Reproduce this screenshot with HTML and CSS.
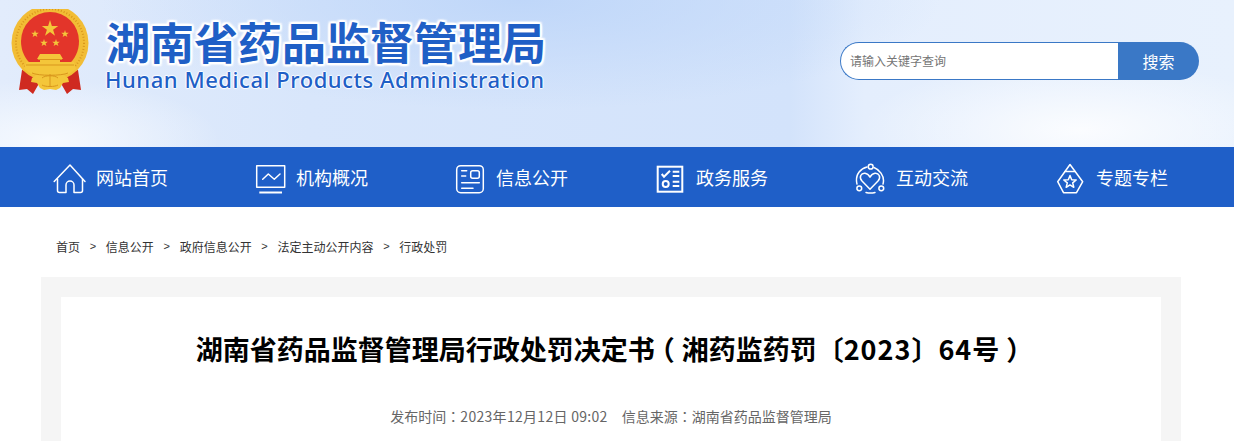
FILE: index.html
```html
<!DOCTYPE html>
<html lang="zh-CN">
<head>
<meta charset="utf-8">
<title>湖南省药品监督管理局行政处罚决定书</title>
<link rel="stylesheet" href="styles.css">
</head>
<body>
<header class="masthead">
  <div class="brand">
    <svg class="emblem" viewBox="11 9 79 85" aria-hidden="true">
      <path class="ribbon" d="M33 67L22 70 19 90l8-1 6 5 8-14z"/>
      <path class="ribbon" d="M67 67l11 3 3 20-8-1-6 5-8-14z"/>
      <circle class="ring" cx="50" cy="43" r="38.500"/>
      <circle class="ring-dots" cx="50" cy="43" r="34"/>
      <path class="red" d="M50 12a29 29 0 0 1 29 29c0 10-4 18-11 24H32c-7-6-11-14-11-24a29 29 0 0 1 29-29z"/>
      <path class="gold" d="M50 20l1.900 6h6.300l-5.100 3.700 1.900 6-5-3.700-5 3.700 1.900-6-5.100-3.700h6.300z"/>
      <path class="gold" d="M35 30l.9 2.700h2.900l-2.300 1.700.9 2.700-2.400-1.700-2.400 1.700.9-2.700-2.300-1.700h2.900z"/>
      <path class="gold" d="M65 30l.9 2.700h2.900l-2.300 1.700.9 2.700-2.400-1.700-2.400 1.700.9-2.700-2.300-1.700h2.900z"/>
      <path class="gold" d="M44 39l.9 2.700h2.900l-2.300 1.700.9 2.700-2.400-1.700-2.400 1.700.9-2.700-2.300-1.700h2.900z"/>
      <path class="gold" d="M56 39l.9 2.700h2.900l-2.300 1.700.9 2.700-2.400-1.700-2.400 1.700.9-2.700-2.300-1.700h2.900z"/>
      <path class="gold" d="M40 54h20l3 5h-3v3h14l2 7H24l2-7h14v-3h-3z"/>
      <path class="gold-line" d="M38 59.500h24M26 65h48"/>
      <path class="gold" d="M24 69h52l-7 5-5 1 4 3 1 4-6 1-3 5-4 2-6-1-6 1-4-2-3-5-6-1 1-4 4-3-5-1z"/>
      <path class="gold-line" d="M32 73c6 3 30 3 36 0M42 78c3-3 13-3 16 0M42 85c3 2 13 2 16 0M50 74v12"/>
    </svg>
    <div class="brand-text">
      <div class="brand-cn">湖南省药品监督管理局</div>
      <div class="brand-en">Hunan Medical Products Administration</div>
    </div>
  </div>
  <form class="search">
    <div class="search-input">请输入关键字查询</div>
    <div class="search-btn">搜索</div>
  </form>
</header>
<nav class="nav">
  <a class="nav-item">
    <svg class="nav-icon" viewBox="0 0 32 32"><path d="M1.200 20.500L17 4l15 16.500"/><path d="M4.500 18v11.500a2 2 0 0 0 2 2H13V24a4 4 0 0 1 8 0v7.500h6.500a2 2 0 0 0 2-2V18"/></svg>
    <span>网站首页</span>
  </a>
  <a class="nav-item">
    <svg class="nav-icon" viewBox="0 0 32 32"><rect x="3.700" y="4.700" width="28" height="21.600"/><path d="M9.700 18.300L15.300 13l6 5.300L27 13"/><path class="thick" d="M6.300 31.500H29"/></svg>
    <span>机构概况</span>
  </a>
  <a class="nav-item">
    <svg class="nav-icon" viewBox="0 0 32 32"><rect x="3.700" y="4.700" width="26.600" height="27" rx="4"/><path d="M8.700 9.700h5M8.700 15h4M8.700 21.700h17.600M8.700 27.300H20"/><rect x="17.700" y="9.700" width="8.600" height="7.600" rx="2"/></svg>
    <span>信息公开</span>
  </a>
  <a class="nav-item">
    <svg class="nav-icon" viewBox="0 0 32 32"><rect class="thick" x="4.700" y="5.700" width="24.600" height="25"/><path class="thick" d="M8.700 13l2.300 2.700 6-6M19.700 10.700h6.600M19.700 15h6.600M19.700 20.700h6.600M19.700 25h6.600"/><circle class="thick" cx="12.700" cy="23" r="3"/></svg>
    <span>政务服务</span>
  </a>
  <a class="nav-item">
    <svg class="nav-icon" viewBox="0 0 32 32"><path d="M17 28.300L9 20c-3.500-4-.8-8 3-7.700 2.200.2 3.700 1.500 5 3.800 1.300-2.300 2.800-3.600 5-3.800 3.800-.3 6.500 3.700 3 7.700z"/><path d="M14 6C7.500 7.500 3 13 3.500 20c.1 1 .2 2 .5 3"/><circle cx="17.700" cy="5.700" r="2.400"/><path d="M21 6.500c6 2.500 9.500 8 9.500 13 0 1-.1 2.200-.5 3.500"/><circle cx="6.300" cy="27.300" r="2.400"/><circle cx="28.300" cy="27.300" r="2.400"/><path d="M13 31.500c3 .8 6 .8 9 0"/></svg>
    <span>互动交流</span>
  </a>
  <a class="nav-item">
    <svg class="nav-icon" viewBox="0 0 32 32"><path d="M17 3.500L4.700 20.700l5.800 11h13l6.200-11z"/><path d="M12 10.500h10"/><path d="M17 14.500l1.700 4.200 4.500.3-3.500 2.900 1.100 4.400-3.800-2.400-3.800 2.400 1.100-4.400-3.500-2.900 4.500-.3z"/></svg>
    <span>专题专栏</span>
  </a>
</nav>
<div class="crumbs">
  <a>首页</a><i>&gt;</i><a>信息公开</a><i>&gt;</i><a>政府信息公开</a><i>&gt;</i><a>法定主动公开内容</a><i>&gt;</i><a>行政处罚</a>
</div>
<main class="panel">
  <article class="sheet">
    <h1 class="title">湖南省药品监督管理局行政处罚决定书<span class="paren-open">（</span>湘药监药罚〔<span class="num">2023</span>〕<span class="num">64</span>号<span class="paren-close">）</span></h1>
    <p class="meta"><span>发布时间<b class="punct" lang="zh-TW">：</b><b class="date">2023年12月12日 09:02</b></span><span>信息来源<b class="punct" lang="zh-TW">：</b>湖南省药品监督管理局</span></p>
  </article>
</main>
</body>
</html>
```
FILE: styles.css
```css
* { box-sizing: border-box; }
html, body { margin: 0; height: 100%; overflow: hidden; background: #fff; }
body {
  display: flex;
  flex-direction: column;
  font-family: "Noto Sans CJK SC", "Noto Sans", sans-serif;
}
.masthead {
  height: 147px;
  flex: none;
  display: flex;
  justify-content: space-between;
  background:
    radial-gradient(ellipse 220px 70px at 1080px 130px, rgba(252,253,255,.95), rgba(252,253,255,0)),
    radial-gradient(ellipse 170px 60px at 50px 140px, rgba(248,251,255,.9), rgba(248,251,255,0)),
    radial-gradient(ellipse 420px 110px at 520px 0, rgba(190,214,249,.95), rgba(190,214,249,0)),
    linear-gradient(to right, #e2ecfc 0, #d8e6fb 25%, #d3e3fb 64%, #e4eefd 70%, #e8f1fd 100%);
}
.brand { display: flex; align-items: flex-start; padding: 9px 0 0 11px; }
.emblem { width: 79px; height: 85px; flex: none; display: block; }
.ribbon { fill: #cf2a20; }
.ring { fill: #f2bd35; }
.ring-dots { fill: none; stroke: #d9961c; stroke-width: 2; stroke-dasharray: 1 2; }
.red { fill: #e3352a; }
.gold { fill: #f4c63a; }
.gold-line { fill: none; stroke: #d9961c; stroke-width: 1; }
.brand-text { margin-left: 15px; padding-top: 8px; }
.brand-cn {
  font-size: 44px;
  line-height: 48px;
  font-weight: 700;
  color: #1f5fc6;
  white-space: nowrap;
  margin-left: 1px;
  text-shadow: 2px 0 1px #fff, -2px 0 1px #fff, 0 2px 1px #fff, 0 -2px 1px #fff, 2px 2px 2px #fff, -2px -2px 2px #fff, 2px -2px 2px #fff, -2px 2px 2px #fff;
}
.brand-en {
  font-family: "Noto Sans", sans-serif;
  font-size: 22px;
  font-weight: 500;
  line-height: 28px;
  letter-spacing: .55px;
  color: #1f5fc6;
  white-space: nowrap;
  text-shadow: 1px 0 1px #fff, -1px 0 1px #fff, 0 1px 1px #fff, 0 -1px 1px #fff;
}
.search {
  display: flex;
  height: 38px;
  width: 359px;
  margin: 42px 35px 0 0;
}
.search-input {
  flex: 1;
  background: #fff;
  border: 1px solid #3a78c6;
  border-right: 0;
  border-radius: 19px 0 0 19px;
  padding-left: 9px;
  font-size: 12px;
  line-height: 36px;
  color: #757575;
}
.search-btn {
  width: 81px;
  background: #3a78c6;
  border-radius: 0 19px 19px 0;
  color: #fff;
  font-size: 16px;
  line-height: 38px;
  text-align: center;
}
.nav {
  height: 60px;
  flex: none;
  background: #1f5fc8;
  display: flex;
  padding-left: 53px;
}
.nav-item {
  width: 200px;
  display: flex;
  align-items: center;
  gap: 11px;
  color: #fff;
  font-size: 18px;
}
.nav-item:last-child { width: auto; }
.nav-icon {
  width: 32px;
  height: 32px;
  flex: none;
  overflow: visible;
  fill: none;
  stroke: #fff;
  stroke-width: 1.500;
  stroke-linejoin: round;
  stroke-linecap: round;
}
.nav-icon .thick { stroke-width: 2; stroke-linecap: butt; stroke-linejoin: miter; }
.crumbs {
  height: 70px;
  flex: none;
  display: flex;
  align-items: center;
  padding: 8px 0 0 56px;
  font-size: 12px;
  color: #333;
}
.crumbs i { font-style: normal; margin: 0 9.700px; font-family: "Liberation Sans", sans-serif; font-size: 11px; }
.panel {
  flex: 1;
  width: 1140px;
  margin-left: 41px;
  padding: 20px 20px 0;
  background: #f5f5f5;
}
.sheet { background: #fff; height: 100%; padding-top: 30px; }
.title {
  margin: 0;
  font-size: 27px;
  line-height: 44px;
  font-weight: 700;
  color: #000;
  text-align: center;
  white-space: nowrap;
}
.num { letter-spacing: 1px; }
.paren-open { margin: 0 7px 0 -7px; }
.paren-close { margin: 0 -7px 0 7px; }
.punct { font-family: "Noto Sans CJK TC", sans-serif; font-weight: inherit; }
.meta {
  margin: 33px 0 0;
  font-size: 14px;
  line-height: 24px;
  color: #666;
  text-align: center;
}
.meta b { font-weight: 400; }
.date { letter-spacing: .3px; }
.meta span + span { margin-left: 14px; }
```
